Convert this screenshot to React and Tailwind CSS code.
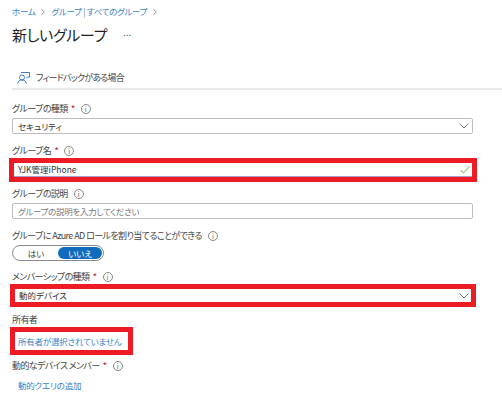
import React from 'react';
import { ChevronRight } from 'lucide-react';

function Info() {
    return (
        <span className="ml-[6px] flex h-[10px] w-[10px] items-center justify-center rounded-full border border-[#888] text-[7px] leading-none tracking-normal text-[#666]">i</span>
    );
}

function Label({ text, required }) {
    return (
        <div className="flex h-[14px] items-center text-[9px] leading-[14px] tracking-[-0.6px] text-[#444]">
            <span>{text}</span>
            {required && <span className="ml-[3px] text-[10px] text-[#c4262e]">*</span>}
            <Info />
        </div>
    );
}

function Chevron() {
    return (
        <svg width="10" height="6" viewBox="0 0 10 6" fill="none" stroke="#777" strokeWidth="1" className="shrink-0">
            <path d="M.5.5 5 5 9.500.5" />
        </svg>
    );
}

function FeedbackIcon() {
    return (
        <svg width="13" height="12" viewBox="0 0 13 12" fill="none" stroke="#3b7fc4" strokeWidth="1">
            <circle cx="5" cy="5.500" r="2.500" />
            <path d="M.5 11.500c.5-2.300 2.200-3.500 4.500-3.500s4 1.200 4.500 3.500" />
            <path d="M4 .5h8.500v4.500h-2l-1.500 1.500" />
        </svg>
    );
}

export default function App() {
    return (
        <div className="h-[401px] w-[502px] overflow-hidden bg-white font-['Noto_Sans_CJK_JP','Liberation_Sans',sans-serif] [font-feature-settings:'palt']">
            <div className="flex h-[22px] items-center pl-[12px] pt-[1px] text-[8.500px] tracking-[-0.3px] text-[#3b7fc4]">
                <span>ホーム</span>
                <ChevronRight size={10} className="mx-[3px] text-[#777]" />
                <span>グループ | すべてのグループ</span>
                <ChevronRight size={10} className="mx-[3px] text-[#777]" />
            </div>
            <div className="flex h-[26px] items-center pl-[12px] text-[#222]">
                <span className="text-[15px] leading-[26px] tracking-[-0.3px]">新しいグループ</span>
                <span className="mb-[6px] ml-[16px] text-[10px] leading-none text-[#555]">...</span>
            </div>
            <div className="ml-[12px] mt-[19px] flex h-[21px] items-center pl-[5px] text-[9px] tracking-[-0.8px] text-[#444]">
                <FeedbackIcon />
                <span className="ml-[6px]">フィードバックがある場合</span>
            </div>
            <div className="ml-[12px] h-[2px] bg-[#e9e9e9]" />

            <div className="mt-[12px] pl-[12px] pr-[29px]">
                <Label text="グループの種類" required />
                <div className="mt-[2px] flex h-[16px] items-center justify-between rounded-[2px] border border-[#bdbdbd] pl-[5px] pr-[3px] text-[8.500px] text-[#333]">
                    <span>セキュリティ</span>
                    <Chevron />
                </div>
            </div>

            <div className="mt-[10px] pl-[12px] pr-[29px]">
                <Label text="グループ名" required />
            </div>
            <div className="ml-[9px] mr-[25px] h-[24px] border-[5px] border-[#ed1c24]">
                <div className="flex h-[14px] items-center justify-between border-b border-[#a99bc9] pl-[4px] pr-[2px] text-[8.500px] text-[#333]">
                    <span>YJK管理iPhone</span>
                    <svg width="10" height="8" viewBox="0 0 10 8" fill="none" stroke="#a9c98c" strokeWidth="1.200" className="shrink-0">
                        <path d="M.5 4 3.500 7 9.500.5" />
                    </svg>
                </div>
            </div>

            <div className="mt-[5px] pl-[12px] pr-[29px]">
                <Label text="グループの説明" />
                <div className="mt-[2px] flex h-[16px] items-center rounded-[2px] border border-[#bdbdbd] pl-[5px] text-[8.500px] tracking-[-0.3px] text-[#777]">
                    グループの説明を入力してください
                </div>
            </div>

            <div className="mt-[10px] pl-[12px]">
                <Label text="グループに Azure AD ロールを割り当てることができる" />
                <div className="mt-[2px] flex h-[16px] w-[92px] items-center rounded-full border border-[#8a8a8a] p-[1px] text-[8.500px]">
                    <span className="flex-1 text-center text-[#444]">はい</span>
                    <span className="flex h-[12px] w-[44px] items-center justify-center rounded-full bg-[#0f6cbd] text-white">いいえ</span>
                </div>
            </div>

            <div className="mt-[9px] pl-[12px]">
                <Label text="メンバーシップの種類" required />
            </div>
            <div className="ml-[10px] mr-[26px] flex h-[23px] items-center justify-between border-[5px] border-[#ed1c24] pl-[4px] pr-[2px] text-[8.500px] text-[#333]">
                <span>動的デバイス</span>
                <Chevron />
            </div>

            <div className="mt-[6px] pl-[12px] text-[9px] leading-[14px] tracking-[-0.6px] text-[#444]">所有者</div>
            <div className="ml-[10px] flex h-[28px] w-[123px] items-center whitespace-nowrap border-[5px] border-[#ed1c24] pl-[3px] text-[8.500px] tracking-[-0.2px] text-[#3b7fc4]">
                所有者が選択されていません
            </div>

            <div className="mt-[4px] pl-[12px]">
                <Label text="動的なデバイス メンバー" required />
            </div>
            <div className="mt-[5px] pl-[18px] text-[8.500px] leading-[14px] tracking-[-0.2px] text-[#3b7fc4]">動的クエリの追加</div>
        </div>
    );
}
